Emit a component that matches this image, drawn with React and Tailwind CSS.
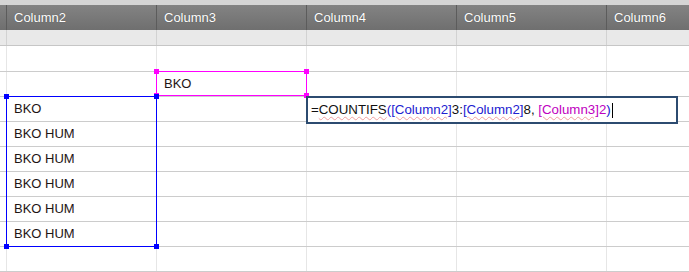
import React from "react";

const cols = ["Column2", "Column3", "Column4", "Column5", "Column6"];

// body rows: [col2, col3]
const rows = [
  ["", ""],
  ["", "BKO"],
  ["BKO", ""],
  ["BKO HUM", ""],
  ["BKO HUM", ""],
  ["BKO HUM", ""],
  ["BKO HUM", ""],
  ["BKO HUM", ""],
  ["", ""],
];

function Handle({ className }) {
  return <div className={"absolute w-[5px] h-[5px] " + className} />;
}

function Ref({ color, children }) {
  return (
    <span className={color + " underline decoration-wavy decoration-[#f2a0a0] decoration-1 underline-offset-2"}>
      {children}
    </span>
  );
}

export default function App() {
  return (
    <div
      className="relative w-[689px] h-[272px] overflow-hidden bg-white text-[13px]"
      style={{ fontFamily: '"Liberation Sans", Arial, sans-serif' }}
    >
      {/* top strip */}
      <div className="h-[5px] bg-[#d5d5d5]" />

      {/* column headers */}
      <div className="flex h-[25px] bg-gradient-to-b from-[#838383] to-[#6f6f6f]">
        <div className="w-[7px] shrink-0 border-r border-[#5c5c5c]" />
        {cols.map((c) => (
          <div
            key={c}
            className="w-[150px] shrink-0 border-r border-[#5c5c5c] pl-[7px] flex items-center text-white [text-shadow:0_0_1px_rgba(0,0,0,0.4)]"
          >
            {c}
          </div>
        ))}
      </div>

      {/* filter row */}
      <div className="flex h-[16px] bg-[#e9e9e9] border-b border-[#c6c6c6]">
        <div className="w-[7px] shrink-0 border-r border-[#d2d2d2]" />
        {cols.map((c) => (
          <div key={c} className="w-[150px] shrink-0 border-r border-[#d2d2d2]" />
        ))}
      </div>

      {/* body */}
      {rows.map((r, i) => (
        <div
          key={i}
          className={
            "flex border-b border-[#cccccc] text-[#1e1414] " +
            (i === 0 ? "h-[26px]" : "h-[25px]")
          }
        >
          <div className="w-[7px] shrink-0 border-r border-[#e6e6e6]" />
          {cols.map((c, j) => (
            <div
              key={c}
              className="w-[150px] shrink-0 border-r border-[#e6e6e6] pl-[7px] flex items-center"
            >
              {j < 2 ? r[j] : ""}
            </div>
          ))}
        </div>
      ))}

      {/* magenta reference range */}
      <div className="absolute left-[156px] top-[71px] w-[151px] h-[25px] border border-[#ff00ff] pointer-events-none">
        <Handle className="bg-[#ff00ff] -left-[3px] -top-[3px]" />
        <Handle className="bg-[#ff00ff] -right-[3px] -top-[3px]" />
        <Handle className="bg-[#ff00ff] -left-[3px] -bottom-[3px]" />
        <Handle className="bg-[#ff00ff] -right-[3px] -bottom-[3px]" />
      </div>

      {/* blue reference range */}
      <div className="absolute left-[6px] top-[96px] w-[151px] h-[151px] border border-[#0000ff] pointer-events-none">
        <Handle className="bg-[#0000ff] -left-[3px] -top-[3px]" />
        <Handle className="bg-[#0000ff] -right-[3px] -top-[3px]" />
        <Handle className="bg-[#0000ff] -left-[3px] -bottom-[3px]" />
        <Handle className="bg-[#0000ff] -right-[3px] -bottom-[3px]" />
      </div>

      {/* in-cell formula editor */}
      <div className="absolute left-[306px] top-[96px] w-[372px] h-[28px] border-2 border-[#2c4b70] bg-white pl-[3px] flex items-center text-[13.3px] text-[#111] whitespace-nowrap">
        <span>
          =<span className="underline decoration-wavy decoration-[#f2a0a0] decoration-1 underline-offset-2">COUNTIFS</span>
          <span className="text-[#2020d0]">(</span>
          <Ref color="text-[#2020d0]">[Column2]</Ref>3:
          <Ref color="text-[#2020d0]">[Column2]</Ref>8,{" "}
          <Ref color="text-[#c000c0]">[Column3]</Ref>
          <span className="text-[#c000c0]">2</span>
          <span className="text-[#2020d0]">)</span>
        </span>
        <span className="inline-block w-px h-[15px] bg-black ml-px" />
      </div>
    </div>
  );
}
